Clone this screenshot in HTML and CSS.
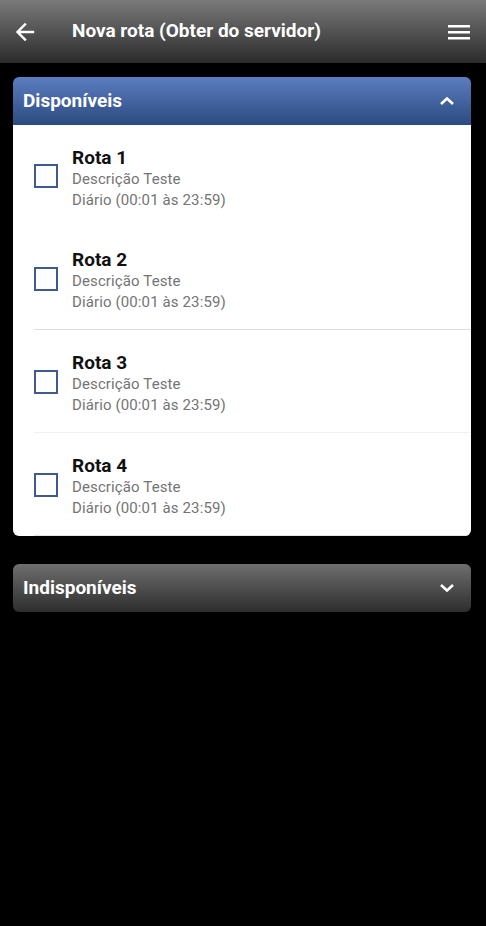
FILE: index.html
```html
<!DOCTYPE html>
<html lang="pt">
<head>
<meta charset="utf-8">
<title>Nova rota</title>
<link rel="stylesheet" href="styles.css">
</head>
<body>
<header class="appbar">
  <svg class="icon back" width="22" height="22" viewBox="0 0 22 22"><path d="M19 11H4M11 3.5L3.5 11L11 18.5" fill="none" stroke="#fff" stroke-width="2.4" stroke-linecap="square"/></svg>
  <h1 class="title">Nova rota (Obter do servidor)</h1>
  <svg class="icon menu" width="22" height="16" viewBox="0 0 22 16"><rect x="0" y="1" width="22" height="2.5" fill="#fff"/><rect x="0" y="7" width="22" height="2.5" fill="#fff"/><rect x="0" y="13" width="22" height="2.5" fill="#fff"/></svg>
</header>
<main class="content">
  <section class="panel open">
    <div class="panel-head blue">
      <span class="panel-title">Disponíveis</span>
      <svg class="chev" width="16" height="10" viewBox="0 0 16 10"><path d="M2 8L8 2.5L14 8" fill="none" stroke="#fff" stroke-width="2.6"/></svg>
    </div>
    <div class="panel-body">
      <div class="row"><span class="check"></span><div class="info"><div class="name">Rota 1</div><div class="sub">Descrição Teste</div><div class="sub">Diário (00:01 às 23:59)</div></div></div>
      <div class="row divided"><span class="check"></span><div class="info"><div class="name">Rota 2</div><div class="sub">Descrição Teste</div><div class="sub">Diário (00:01 às 23:59)</div></div></div>
      <div class="row divided light"><span class="check"></span><div class="info"><div class="name">Rota 3</div><div class="sub">Descrição Teste</div><div class="sub">Diário (00:01 às 23:59)</div></div></div>
      <div class="row divided"><span class="check"></span><div class="info"><div class="name">Rota 4</div><div class="sub">Descrição Teste</div><div class="sub">Diário (00:01 às 23:59)</div></div></div>
    </div>
  </section>
  <section class="panel">
    <div class="panel-head gray">
      <span class="panel-title">Indisponíveis</span>
      <svg class="chev" width="16" height="10" viewBox="0 0 16 10"><path d="M2 2L8 7.5L14 2" fill="none" stroke="#fff" stroke-width="2.6"/></svg>
    </div>
  </section>
</main>
</body>
</html>
```
FILE: styles.css
```css
* { box-sizing: border-box; }
html, body { margin: 0; padding: 0; }
body {
  background: #000;
  font-family: Roboto, "Noto Sans", "Liberation Sans", sans-serif;
  min-height: 926px;
}
.appbar {
  height: 63px;
  display: flex;
  align-items: center;
  padding: 0 16px 0 14px;
  background: linear-gradient(#7a7a7a, #2b2b2b);
}
.icon.back { flex: none; }
.title {
  margin: 0 0 2px 36px;
  flex: 1;
  color: #fff;
  font-size: 19px;
  font-weight: 700;
}
.icon.menu { flex: none; margin-top: 1px; }
.content {
  padding: 14px 15px 0 13px;
  display: flex;
  flex-direction: column;
  gap: 28px;
}
.panel { border-radius: 6px; overflow: hidden; }
.panel-head {
  height: 48px;
  display: flex;
  align-items: center;
  justify-content: space-between;
  padding: 0 16px 1px 10px;
}
.panel-head.blue { background: linear-gradient(#5c7dc0, #2b4a80); }
.panel-head.gray { background: linear-gradient(#6e6e6e, #2d2d2d); }
.panel-title { color: #fff; font-size: 19px; font-weight: 700; }
.chev { margin-top: 1px; }
.panel-body { background: #fff; }
.row {
  height: 102px;
  margin-left: 21px;
  display: flex;
  align-items: center;
  gap: 14px;
}
.row.divided { border-bottom: 1px solid #dedede; height: 103px; padding-top: 1px; }
.row.divided.light { border-bottom-color: #f0f0f0; }
.row:last-child { border-bottom-color: #e4e4e4; }
.check {
  flex: none;
  width: 24px;
  height: 24px;
  border: 2px solid #3e5a8e;
}
.info { padding-top: 4px; }
.name { font-size: 19px; font-weight: 700; color: #111; line-height: 23px; }
.sub { font-size: 15px; color: #747474; line-height: 21px; letter-spacing: 0.12px; }
```
